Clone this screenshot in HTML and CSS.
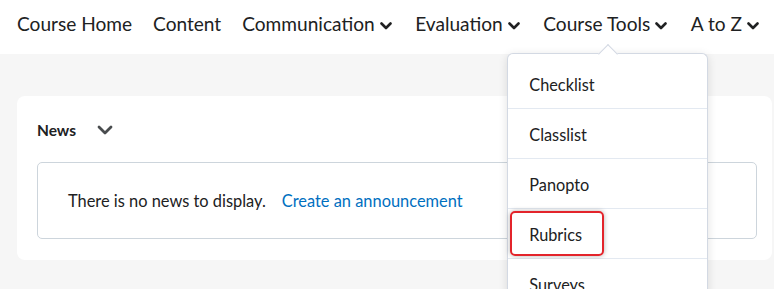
FILE: index.html
```
<!DOCTYPE html>
<html>
<head>
<meta charset="utf-8">
<link rel="stylesheet" href="styles.css">
</head>
<body>
<nav class="nav">
  <span class="nav-item">Course Home</span>
  <span class="nav-item">Content</span>
  <span class="nav-item">Communication <svg class="chev" viewBox="0 0 12 8"><path d="M1.5 1.5 L6 6 L10.5 1.5"/></svg></span>
  <span class="nav-item">Evaluation <svg class="chev" viewBox="0 0 12 8"><path d="M1.5 1.5 L6 6 L10.5 1.5"/></svg></span>
  <span class="nav-item tools">Course Tools <svg class="chev" viewBox="0 0 12 8"><path d="M1.5 1.5 L6 6 L10.5 1.5"/></svg>
    <div class="menu">
      <div class="menu-item">Checklist</div>
      <div class="menu-item">Classlist</div>
      <div class="menu-item">Panopto</div>
      <div class="menu-item rubrics">Rubrics<span class="highlight"></span></div>
      <div class="menu-item">Surveys</div>
    </div>
  </span>
  <span class="nav-item">A to Z <svg class="chev" viewBox="0 0 12 8"><path d="M1.5 1.5 L6 6 L10.5 1.5"/></svg></span>
</nav>
<main class="main">
  <section class="card">
    <div class="card-head">
      <span class="card-title">News</span>
      <svg class="chev-lg" viewBox="0 0 16 10"><path d="M2 2 L8 8 L14 2"/></svg>
    </div>
    <div class="empty">
      <span>There is no news to display.</span>
      <span class="link">Create an announcement</span>
    </div>
  </section>
</main>
</body>
</html>
```
FILE: styles.css
```
html, body {
  margin: 0;
  padding: 0;
  height: 289px;
  overflow: hidden;
  background: #f6f6f6;
  font-family: Lato, "Open Sans", sans-serif;
  color: #202122;
}
.nav {
  height: 54px;
  background: #ffffff;
  display: flex;
  align-items: flex-start;
  padding-left: 17px;
  gap: 21px;
  box-sizing: border-box;
  padding-top: 12px;
  position: relative;
  z-index: 2;
}
.nav-item {
  font-size: 19.1px;
  line-height: 24px;
  white-space: nowrap;
  display: flex;
  align-items: center;
  gap: 5px;
  position: relative;
}
.chev {
  width: 12px;
  height: 8px;
  margin-top: 3px;
  margin-right: 2.6px;
  fill: none;
  stroke: #202122;
  stroke-width: 2.6;
  stroke-linecap: round;
  stroke-linejoin: round;
}
.menu {
  position: absolute;
  top: 41px;
  left: -36px;
  width: 199px;
  background: #ffffff;
  border: 1px solid #d3d9e3;
  border-bottom: none;
  border-radius: 6px 6px 0 0;
  box-shadow: 0 2px 10px rgba(0,0,0,0.12);
  padding-top: 5px;
  font-size: 16.3px;
}
.menu::before {
  content: "";
  position: absolute;
  top: -7px;
  left: 93px;
  width: 13px;
  height: 13px;
  background: #ffffff;
  border-left: 1px solid #d3d9e3;
  border-top: 1px solid #d3d9e3;
  transform: rotate(45deg);
}
.menu-item {
  height: 49px;
  border-bottom: 1px solid #e3e9f1;
  padding-left: 21px;
  line-height: 51px;
  position: relative;
  background: #ffffff;
}
.menu-item:last-child {
  border-bottom: none;
}
.highlight {
  position: absolute;
  left: 2px;
  top: 2px;
  width: 90px;
  height: 41px;
  border: 2px solid #e3242b;
  border-radius: 5px;
  box-shadow: 0 0 5px rgba(0,0,0,0.3);
}
.main {
  padding: 42px 2px 0 17px;
}
.card {
  background: #ffffff;
  border-radius: 8px;
  height: 164px;
  box-sizing: border-box;
  padding: 20px 15px 0 20px;
}
.card-head {
  display: flex;
  align-items: center;
  gap: 21px;
  height: 28px;
}
.card-title {
  font-size: 15.5px;
  font-weight: 700;
}
.chev-lg {
  width: 16px;
  height: 10px;
  fill: none;
  stroke: #494c4e;
  stroke-width: 2.8;
  stroke-linecap: round;
  stroke-linejoin: round;
}
.empty {
  margin-top: 18px;
  height: 77px;
  box-sizing: border-box;
  border: 1px solid #cdd5dc;
  border-radius: 5px;
  display: flex;
  align-items: center;
  padding-left: 30px;
  gap: 16px;
  font-size: 16.4px;
}
.link {
  color: #006fbf;
}
```
